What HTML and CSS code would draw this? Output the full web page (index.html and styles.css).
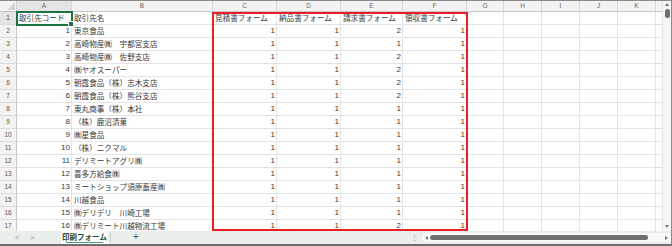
FILE: index.html
```html
<!DOCTYPE html>
<html lang="ja">
<head>
<meta charset="utf-8">
<link rel="stylesheet" href="styles.css">
</head>
<body>
<div class="window">
  <div class="main">
    <div class="sheet">
      <div class="grid" id="grid">
        <div class="corner"><span class="tri"></span></div>
        <div class="ch sel">A</div><div class="ch">B</div><div class="ch">C</div><div class="ch">D</div><div class="ch">E</div><div class="ch">F</div><div class="ch">G</div><div class="ch">H</div><div class="ch">I</div><div class="ch">J</div><div class="ch">K</div><div class="ch last"></div>

        <div class="rh sel">1</div><div class="c active">取引先コード<span class="handle"></span></div><div class="c">取引先名</div><div class="c">見積書フォーム</div><div class="c">納品書フォーム</div><div class="c">請求書フォーム</div><div class="c">領収書フォーム</div><div class="c"></div><div class="c"></div><div class="c"></div><div class="c"></div><div class="c"></div><div class="c last"></div>

        <div class="rh">2</div><div class="c n">1</div><div class="c">東京食品</div><div class="c n">1</div><div class="c n">1</div><div class="c n">2</div><div class="c n">1</div><div class="c"></div><div class="c"></div><div class="c"></div><div class="c"></div><div class="c"></div><div class="c last"></div>

        <div class="rh">3</div><div class="c n">2</div><div class="c">高崎物産㈱　宇都宮支店</div><div class="c n">1</div><div class="c n">1</div><div class="c n">1</div><div class="c n">1</div><div class="c"></div><div class="c"></div><div class="c"></div><div class="c"></div><div class="c"></div><div class="c last"></div>

        <div class="rh">4</div><div class="c n">3</div><div class="c">高崎物産㈱　佐野支店</div><div class="c n">1</div><div class="c n">1</div><div class="c n">2</div><div class="c n">1</div><div class="c"></div><div class="c"></div><div class="c"></div><div class="c"></div><div class="c"></div><div class="c last"></div>

        <div class="rh">5</div><div class="c n">4</div><div class="c">㈱ヤオスーパー</div><div class="c n">1</div><div class="c n">1</div><div class="c n">2</div><div class="c n">1</div><div class="c"></div><div class="c"></div><div class="c"></div><div class="c"></div><div class="c"></div><div class="c last"></div>

        <div class="rh">6</div><div class="c n">5</div><div class="c">朝霞食品（株）志木支店</div><div class="c n">1</div><div class="c n">1</div><div class="c n">2</div><div class="c n">1</div><div class="c"></div><div class="c"></div><div class="c"></div><div class="c"></div><div class="c"></div><div class="c last"></div>

        <div class="rh">7</div><div class="c n">6</div><div class="c">朝霞食品（株）熊谷支店</div><div class="c n">1</div><div class="c n">1</div><div class="c n">2</div><div class="c n">1</div><div class="c"></div><div class="c"></div><div class="c"></div><div class="c"></div><div class="c"></div><div class="c last"></div>

        <div class="rh">8</div><div class="c n">7</div><div class="c">東丸商事（株）本社</div><div class="c n">1</div><div class="c n">1</div><div class="c n">1</div><div class="c n">1</div><div class="c"></div><div class="c"></div><div class="c"></div><div class="c"></div><div class="c"></div><div class="c last"></div>

        <div class="rh">9</div><div class="c n">8</div><div class="c">（株）鹿沼漬菓</div><div class="c n">1</div><div class="c n">1</div><div class="c n">1</div><div class="c n">1</div><div class="c"></div><div class="c"></div><div class="c"></div><div class="c"></div><div class="c"></div><div class="c last"></div>

        <div class="rh">10</div><div class="c n">9</div><div class="c">㈱星食品</div><div class="c n">1</div><div class="c n">1</div><div class="c n">1</div><div class="c n">1</div><div class="c"></div><div class="c"></div><div class="c"></div><div class="c"></div><div class="c"></div><div class="c last"></div>

        <div class="rh">11</div><div class="c n">10</div><div class="c">（株）ニクマル</div><div class="c n">1</div><div class="c n">1</div><div class="c n">1</div><div class="c n">1</div><div class="c"></div><div class="c"></div><div class="c"></div><div class="c"></div><div class="c"></div><div class="c last"></div>

        <div class="rh">12</div><div class="c n">11</div><div class="c">デリミートアグリ㈱</div><div class="c n">1</div><div class="c n">1</div><div class="c n">1</div><div class="c n">1</div><div class="c"></div><div class="c"></div><div class="c"></div><div class="c"></div><div class="c"></div><div class="c last"></div>

        <div class="rh">13</div><div class="c n">12</div><div class="c">喜多方給食㈱</div><div class="c n">1</div><div class="c n">1</div><div class="c n">1</div><div class="c n">1</div><div class="c"></div><div class="c"></div><div class="c"></div><div class="c"></div><div class="c"></div><div class="c last"></div>

        <div class="rh">14</div><div class="c n">13</div><div class="c">ミートショップ須原畜産㈱</div><div class="c n">1</div><div class="c n">1</div><div class="c n">1</div><div class="c n">1</div><div class="c"></div><div class="c"></div><div class="c"></div><div class="c"></div><div class="c"></div><div class="c last"></div>

        <div class="rh">15</div><div class="c n">14</div><div class="c">川越食品</div><div class="c n">1</div><div class="c n">1</div><div class="c n">1</div><div class="c n">1</div><div class="c"></div><div class="c"></div><div class="c"></div><div class="c"></div><div class="c"></div><div class="c last"></div>

        <div class="rh">16</div><div class="c n">15</div><div class="c">㈱デリデリ　川崎工場</div><div class="c n">1</div><div class="c n">1</div><div class="c n">1</div><div class="c n">1</div><div class="c"></div><div class="c"></div><div class="c"></div><div class="c"></div><div class="c"></div><div class="c last"></div>

        <div class="rh">17</div><div class="c n">16</div><div class="c">㈱デリミート川越物流工場</div><div class="c n">1</div><div class="c n">1</div><div class="c n">2</div><div class="c n">1</div><div class="c"></div><div class="c"></div><div class="c"></div><div class="c"></div><div class="c"></div><div class="c last"></div>
      </div>
      <div class="redbox"></div>
    </div>
    <div class="vscroll">
      <span class="arrow up"></span>
      <span class="vthumb"></span>
      <span class="vspace"></span>
      <span class="arrow down"></span>
    </div>
  </div>
  <div class="tabbar">
    <div class="nav"><span>&lt;</span><span>&gt;</span></div>
    <div class="tab">印刷フォーム</div>
    <div class="sep"></div>
    <div class="plus">+</div>
    <div class="spacer"></div>
    <div class="dots">⋮</div>
    <div class="hscroll">
      <span class="arrow left"></span>
      <span class="hthumb"></span>
      <span class="hspace"></span>
      <span class="arrow right"></span>
    </div>
  </div>
</div>
</body>
</html>
```

FILE: styles.css
```css
* { box-sizing: border-box; }
html, body { margin: 0; padding: 0; background: #fff; }
body {
  font-family: "Noto Sans CJK JP", "Noto Sans", sans-serif;
  color: #333;
}
.window {
  width: 672px;
  height: 246px;
  border-top: 1px solid #8a8a8a;
  border-right: 1px solid #8a8a8a;
  border-bottom: 2px solid #6e6e6e;
  display: flex;
  flex-direction: column;
  overflow: hidden;
}
.main {
  display: flex;
  height: 230px;
  flex: none;
}
.sheet {
  position: relative;
  width: 662px;
  height: 230px;
  overflow: hidden;
}
.grid {
  display: grid;
  grid-template-columns: 17px 55px 141px 64px 64px 62px 64px 37px 38px 38px 38px 38px 6px;
  grid-template-rows: 11px repeat(17, 13px);
}
.corner {
  position: relative;
  background: #f3f3f3;
  border-right: 1px solid #d4d4d4;
  border-bottom: 1px solid #c8c8c8;
}
.tri {
  position: absolute;
  right: 1px;
  bottom: 1px;
  width: 0;
  height: 0;
  border-left: 8px solid transparent;
  border-bottom: 8px solid #d6d6d6;
}
.ch {
  background: #f3f3f3;
  border-right: 1px solid #d8d8d8;
  border-bottom: 1px solid #c8c8c8;
  font-family: "Liberation Sans", sans-serif;
  font-size: 6.5px;
  color: #666;
  text-align: center;
  line-height: 10px;
}
.ch.sel { background: #e4e4e4; }
.rh {
  background: #f3f3f3;
  border-right: 1px solid #c8c8c8;
  border-bottom: 1px solid #dcdcdc;
  font-family: "Liberation Sans", sans-serif;
  font-size: 6.5px;
  color: #555;
  text-align: center;
  line-height: 12px;
}
.rh.sel { background: #e4e4e4; }
.c {
  position: relative;
  border-right: 1px solid #e3e3e3;
  border-bottom: 1px solid #e3e3e3;
  font-size: 7.6px;
  line-height: 12px;
  white-space: nowrap;
  overflow: visible;
  padding: 0 1px 0 2px;
  color: #3a3a3a;
}
.c.n {
  text-align: right;
  font-family: "Liberation Sans", sans-serif;
  font-size: 8px;
}
.c.last, .ch.last { border-right: none; }
.c.active {
  outline: 2px solid #1e7145;
  outline-offset: -1px;
  z-index: 2;
}
.handle {
  position: absolute;
  right: -3px;
  bottom: -3px;
  width: 4px;
  height: 4px;
  background: #1e7145;
  border: 1px solid #fff;
  box-sizing: content-box;
}
.redbox {
  position: absolute;
  left: 212px;
  top: 11px;
  width: 256px;
  height: 219px;
  border: 2px solid #ee1c25;
  pointer-events: none;
  z-index: 3;
}
.vscroll {
  width: 9px;
  height: 230px;
  background: #f6f6f6;
  border-left: 1px solid #e6e6e6;
  display: flex;
  flex-direction: column;
  align-items: center;
  padding: 2px 0 3px;
}
.arrow { width: 0; height: 0; display: block; flex: none; }
.arrow.up { border-left: 2.5px solid transparent; border-right: 2.5px solid transparent; border-bottom: 3px solid #777; }
.arrow.down { border-left: 2.5px solid transparent; border-right: 2.5px solid transparent; border-top: 3px solid #777; }
.arrow.left { border-top: 2.5px solid transparent; border-bottom: 2.5px solid transparent; border-right: 3px solid #777; }
.arrow.right { border-top: 2.5px solid transparent; border-bottom: 2.5px solid transparent; border-left: 3px solid #777; }
.vthumb {
  margin-top: 3px;
  width: 5px;
  height: 9px;
  border-radius: 3px;
  background: #6f6f6f;
  flex: none;
}
.vspace { flex: 1; }
.tabbar {
  height: 13px;
  flex: none;
  background: #e9eeea;
  display: flex;
  align-items: stretch;
  font-size: 8px;
}
.nav {
  width: 61px;
  display: flex;
  gap: 10px;
  padding-left: 15px;
  align-items: center;
  color: #9a9a9a;
  font-family: "Liberation Sans", sans-serif;
  font-size: 8px;
}
.tab {
  width: 47px;
  background: #fff;
  text-align: center;
  line-height: 11px;
  color: #1f4d33;
  font-weight: bold;
  font-size: 7.5px;
  position: relative;
}
.tab::after {
  content: "";
  position: absolute;
  left: 5px;
  right: 5px;
  bottom: 1px;
  height: 1px;
  background: #4b9b71;
}
.sep {
  width: 1px;
  margin: 2px 0 2px 2px;
  background: #c9cfcb;
}
.plus {
  margin-left: 22px;
  color: #555;
  font-family: "Liberation Sans", sans-serif;
  font-size: 10px;
  line-height: 12px;
}
.spacer { flex: 1; }
.dots {
  width: 8px;
  color: #777;
  font-size: 7px;
  line-height: 13px;
  text-align: center;
  margin-right: 4px;
}
.hscroll {
  width: 249px;
  margin: 2px 0 2px;
  background: #f7f9f8;
  border-radius: 4px 0 0 4px;
  display: flex;
  align-items: center;
  padding: 0 3px 0 3px;
}
.hthumb {
  margin-left: 2px;
  width: 218px;
  height: 5px;
  border-radius: 3px;
  background: #6f6f6f;
  flex: none;
}
.hspace { flex: 1; }
```
